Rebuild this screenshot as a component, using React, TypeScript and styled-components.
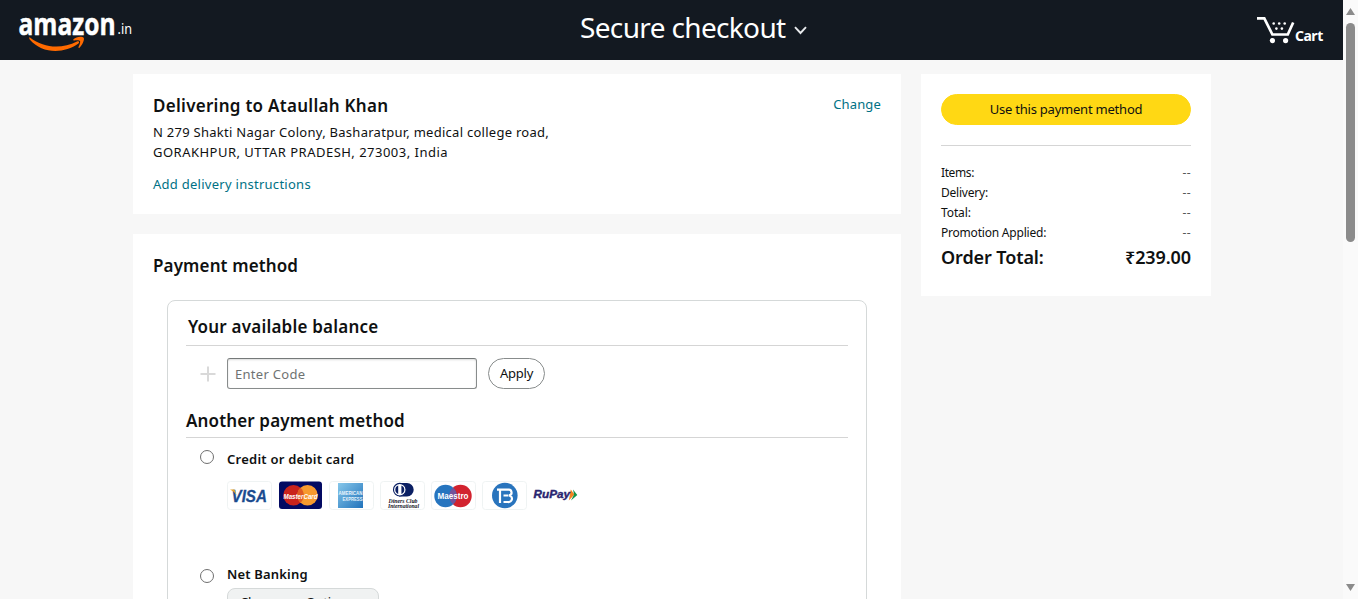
import React from "react";
import styled, { createGlobalStyle, css } from "styled-components";

const Global = createGlobalStyle`
  * { box-sizing: border-box; }
  html, body { margin: 0; height: 599px; overflow: hidden; }
  body { font-family: "Noto Sans", "Open Sans", sans-serif; font-size: 13px; line-height: 20px; color: #0f1111; background: #f7f7f7; }
  h1, h2, h3, p { margin: 0; }
`;

const Viewport = styled.div`
  display: flex;
  width: 1358px;
  height: 599px;
  overflow: hidden;
`;

const Page = styled.div`
  width: 1343px;
  height: 599px;
  overflow: hidden;
`;

const Header = styled.header`
  display: grid;
  grid-template-columns: 570px 1fr 106px;
  height: 60px;
  background: #131921;
  color: #fff;
`;

const Title = styled.h1`
  display: flex;
  align-items: center;
  height: 53px;
  padding-left: 10px;
  font-size: 28px;
  font-weight: 400;
  line-height: 36px;
  letter-spacing: -0.65px;
  white-space: nowrap;
  svg { margin: 7px 0 0 8px; }
`;

const CartLink = styled.div`
  display: flex;
  padding: 15px 0 0 20px;
  font-size: 14px;
  font-weight: 700;
  letter-spacing: -0.5px;
  span { margin-top: 11px; }
`;

const Columns = styled.main`
  display: grid;
  grid-template-columns: 768px 290px;
  column-gap: 20px;
  align-items: start;
  padding: 14px 0 0 133px;
`;

const Stack = styled.div`
  display: flex;
  flex-direction: column;
  gap: 20px;
`;

const Card = styled.section<{ $height: number }>`
  height: ${(p) => p.$height}px;
  padding: 20px;
  background: #fff;
`;

const CardTop = styled.div`
  display: flex;
  justify-content: space-between;
`;

const spacing = css<{ $track?: number }>`
  letter-spacing: ${(p) => p.$track ?? 0}px;
  white-space: nowrap;
`;

const Heading = styled.h2<{ $track?: number }>`
  font-size: 17px;
  font-weight: 600;
  line-height: 24px;
  ${spacing}
`;

const Line = styled.p<{ $track?: number }>`
  ${spacing}
`;

const Address = styled.div`
  margin: 4px 0 12px;
`;

const Link = styled.a<{ $track?: number }>`
  color: #007185;
  ${spacing}
`;

const Panel = styled.div`
  width: 700px;
  height: 420px;
  margin: 22px 0 0 14px;
  padding: 14px 18px 0;
  border: 1px solid #d5d9d9;
  border-radius: 8px;
`;

const PanelHeading = styled(Heading)<{ $gap: number; $indent?: number }>`
  padding: 0 0 ${(p) => p.$gap}px ${(p) => p.$indent ?? 0}px;
  border-bottom: 1px solid #d5d5d5;
`;

const CodeRow = styled.div`
  display: flex;
  align-items: center;
  height: 31px;
  margin: 12px 0 20px 14px;
`;

const CodeInput = styled.input`
  width: 250px;
  height: 31px;
  margin: 0 11px;
  padding: 1px 7px 0;
  border: 1px solid #888c8c;
  border-top-color: #757979;
  border-radius: 3px;
  box-shadow: inset 0 1px 2px rgba(15, 17, 17, 0.15);
  background: #fff;
  font: 13px/20px "Noto Sans", sans-serif;
  letter-spacing: 0.3px;
  &::placeholder { color: #6f7373; opacity: 1; }
`;

const PillButton = styled.button<{ $primary?: boolean }>`
  width: ${(p) => (p.$primary ? 250 : 57)}px;
  height: 31px;
  padding: 0 0 2px;
  border: 1px solid ${(p) => (p.$primary ? "#ffd814" : "#888c8c")};
  border-radius: 16px;
  background: ${(p) => (p.$primary ? "#ffd814" : "#fff")};
  color: #0f1111;
  font: 13px/20px "Noto Sans", sans-serif;
  letter-spacing: -0.22px;
`;

const Option = styled.div<{ $top: number }>`
  display: grid;
  grid-template-columns: 14px 1fr;
  column-gap: 13px;
  margin: ${(p) => p.$top}px 0 0 14px;
`;

const Radio = styled.span<{ $top: number }>`
  width: 14px;
  height: 14px;
  margin-top: ${(p) => p.$top}px;
  border: 1px solid #6f6f6f;
  border-radius: 50%;
  background: #fff;
`;

const OptionTitle = styled.h3<{ $track?: number }>`
  font-size: 13px;
  font-weight: 600;
  line-height: 20px;
  ${spacing}
`;

const Brands = styled.div`
  display: flex;
  gap: 6px;
  margin-top: 12px;
`;

const Brand = styled.svg`
  display: block;
  flex: none;
  width: 45px;
  height: 29px;
`;

const Select = styled.div`
  width: 152px;
  height: 31px;
  margin-top: 4px;
  padding: 3px 12px;
  border: 1px solid #d5d9d9;
  border-radius: 8px;
  background: #f0f2f2;
  line-height: 20px;
  letter-spacing: -0.2px;
`;

const Divider = styled.hr`
  height: 1px;
  margin: 20px 0 17px;
  border: 0;
  background: #d5d5d5;
`;

const SummaryRow = styled.div<{ $total?: boolean; $track?: number }>`
  display: flex;
  justify-content: space-between;
  font-size: ${(p) => (p.$total ? 18 : 12)}px;
  font-weight: ${(p) => (p.$total ? 600 : 400)};
  line-height: ${(p) => (p.$total ? 28 : 20)}px;
  ${spacing}
`;

const Dash = styled.span`
  color: #565959;
  letter-spacing: 0.4px;
`;

const ScrollTrack = styled.div`
  display: flex;
  flex-direction: column;
  align-items: center;
  justify-content: space-between;
  width: 15px;
  height: 599px;
  padding: 8px 0;
  background: #fafafa;
`;

const Thumb = styled.div`
  width: 9px;
  height: 219px;
  margin: 8px 0 auto;
  border-radius: 5px;
  background: #8b8b8b;
`;

const Logo = () => (
  <svg width="160" height="60" viewBox="0 0 160 60">
    <text x="18.5" y="35" fill="#fff" stroke="#fff" strokeWidth="0.5" fontFamily="Open Sans, sans-serif" fontWeight="700" fontSize="31" textLength="97" lengthAdjust="spacingAndGlyphs">amazon</text>
    <text x="117.5" y="34" fill="#fff" fontFamily="Noto Sans, sans-serif" fontSize="14" textLength="14.5" lengthAdjust="spacingAndGlyphs">.in</text>
    <path d="M30 37.5C44 48.5 62 49 77 41.5C79 40.6 80 42.3 78.4 43.5C64 54 42 54 29.7 39.5C28.8 38 29.2 37 30 37.5Z" fill="#ff6a00" />
    <path d="M73.5 39.3C76 36.6 82 36 83.7 37.8C84.8 40 82 45.5 79.5 47.7C78.8 48.2 78.2 47.7 78.5 47C79.6 44.5 80.6 42 80 41C79.2 40 76.5 40.2 74.2 40.6C73.3 40.7 72.9 39.9 73.5 39.3Z" fill="#ff6a00" />
  </svg>
);

const CartIcon = () => (
  <svg width="38" height="30" viewBox="0 0 38 30" fill="#fff">
    <path d="M0 3.3H7.3L15.4 19.5H30.8L36.2 7.5" fill="none" stroke="#fff" strokeWidth="2.7" />
    <circle cx="15.4" cy="25.6" r="2.6" />
    <circle cx="28.6" cy="25.6" r="2.6" />
    {[16.7, 22.2, 27.7].map((x) => <circle key={x} cx={x} cy="8.5" r="1.3" />)}
    {[19.4, 24.9].map((x) => <circle key={x} cx={x} cy="13.6" r="1.3" />)}
  </svg>
);

const Frame = () => <rect x="0.5" y="0.5" width="44" height="28" rx="3" fill="#fff" stroke="#eff3f3" />;

const Visa = () => (
  <Brand viewBox="0 0 45 29">
    <Frame />
    <text x="4.5" y="20.5" fill="#1b4b8f" stroke="#1b4b8f" strokeWidth="0.3" fontFamily="Liberation Sans, sans-serif" fontStyle="italic" fontWeight="700" fontSize="16.5" textLength="35.5" lengthAdjust="spacingAndGlyphs">VISA</text>
    <path d="M3 8.5H7.5L9.5 14Q7.5 10.5 3 8.5Z" fill="#e5a62d" />
  </Brand>
);

const MasterCard = () => (
  <Brand viewBox="0 0 45 29">
    <rect x="1" y="0.5" width="43" height="27.5" rx="3" fill="#030a62" />
    <circle cx="15.5" cy="14.2" r="10.3" fill="#c9231c" />
    <circle cx="29.5" cy="14.2" r="10.3" fill="#f79a2f" />
    <path d="M22.5 6.7A10.3 10.3 0 0 0 22.5 21.7A10.3 10.3 0 0 0 22.5 6.7Z" fill="#df5a24" />
    <text x="5.5" y="17.5" fill="#fff" fontFamily="Liberation Sans, sans-serif" fontStyle="italic" fontWeight="700" fontSize="8" textLength="34" lengthAdjust="spacingAndGlyphs">MasterCard</text>
  </Brand>
);

const Amex = () => (
  <Brand viewBox="0 0 45 29">
    <defs>
      <linearGradient id="amex" x1="0" y1="0" x2="1" y2="1">
        <stop offset="0" stopColor="#86c7ea" />
        <stop offset="1" stopColor="#2072bb" />
      </linearGradient>
    </defs>
    <Frame />
    <rect x="9" y="2" width="25" height="25" fill="url(#amex)" />
    <g fill="#e8f5fc" fontFamily="Liberation Sans, sans-serif" fontWeight="700" fontSize="6">
      <text x="9.5" y="13.5" textLength="24" lengthAdjust="spacingAndGlyphs">AMERICAN</text>
      <text x="13.5" y="19.5" textLength="20" lengthAdjust="spacingAndGlyphs">EXPRESS</text>
    </g>
  </Brand>
);

const Diners = () => (
  <Brand viewBox="0 0 45 29">
    <Frame />
    <path d="M19 2H27A6.7 6.7 0 0 1 27 15.4H19Z" fill="#0a1f63" />
    <circle cx="19.8" cy="8.7" r="6.3" fill="#fff" stroke="#0a1f63" strokeWidth="1.1" />
    <path d="M18.2 4.5A4.5 4.5 0 0 0 18.2 12.9ZM21.4 4.5A4.5 4.5 0 0 1 21.4 12.9Z" fill="#0a1f63" />
    <g fill="#15151f" fontFamily="Liberation Serif, serif" fontStyle="italic" fontWeight="700" fontSize="7">
      <text x="8.5" y="21.8" textLength="29" lengthAdjust="spacingAndGlyphs">Diners Club</text>
      <text x="8" y="27" textLength="31" lengthAdjust="spacingAndGlyphs">International</text>
    </g>
  </Brand>
);

const Maestro = () => (
  <Brand viewBox="0 0 45 29">
    <Frame />
    <circle cx="29.5" cy="15" r="11.2" fill="#d2232f" />
    <circle cx="14.5" cy="15" r="11.2" fill="#2675bf" />
    <path d="M22 6.7A11.2 11.2 0 0 1 22 23.3A11.2 11.2 0 0 1 22 6.7Z" fill="#75529a" />
    <text x="6.5" y="18" fill="#fff" fontFamily="Liberation Sans, sans-serif" fontWeight="700" fontSize="8.3" textLength="31" lengthAdjust="spacingAndGlyphs">Maestro</text>
  </Brand>
);

const BhimCard = () => (
  <Brand viewBox="0 0 45 29">
    <Frame />
    <circle cx="22.8" cy="14.5" r="12.8" fill="#2974bd" />
    <path d="M15 8.7H26A2.9 2.9 0 0 1 27.2 14.4A3.3 3.3 0 0 1 26 21H21.5M18 8.7V22M21.5 14.5H26.5" fill="none" stroke="#fff" strokeWidth="2.2" />
  </Brand>
);

const RuPay = () => (
  <Brand viewBox="0 0 45 29">
    <path d="M37.8 8.5L41.5 13.5L35.8 19.5Z" fill="#f58220" />
    <path d="M40 8.5L44.3 14L38 19.5L41 13.5Z" fill="#159447" />
    <text x="0.5" y="17" fill="#29246f" stroke="#29246f" strokeWidth="0.4" fontFamily="Liberation Sans, sans-serif" fontStyle="italic" fontWeight="700" fontSize="11.5" textLength="36.5" lengthAdjust="spacingAndGlyphs">RuPay</text>
  </Brand>
);

const summary = [
  { label: "Items:", track: -0.4 },
  { label: "Delivery:", track: -0.22 },
  { label: "Total:", track: -0.1 },
  { label: "Promotion Applied:", track: -0.21 },
];

export default function App() {
  return (
    <>
      <Global />
      <Viewport>
        <Page>
          <Header>
            <Logo />
            <Title>
              Secure checkout
              <svg width="13" height="9" viewBox="0 0 13 9"><path d="M1 1.2L6.5 7L12 1.2" fill="none" stroke="#e7e9ec" strokeWidth="1.9" /></svg>
            </Title>
            <CartLink>
              <CartIcon />
              <span>Cart</span>
            </CartLink>
          </Header>
          <Columns>
            <Stack>
              <Card $height={140}>
                <CardTop>
                  <Heading $track={0.28}>Delivering to Ataullah Khan</Heading>
                  <Link $track={0.15}>Change</Link>
                </CardTop>
                <Address>
                  <Line $track={0.27}>N 279 Shakti Nagar Colony, Basharatpur, medical college road,</Line>
                  <Line $track={0.48}>GORAKHPUR, UTTAR PRADESH, 273003, India</Line>
                </Address>
                <Link $track={0.27}>Add delivery instructions</Link>
              </Card>
              <Card $height={500}>
                <Heading $track={0.13}>Payment method</Heading>
                <Panel>
                  <PanelHeading $gap={6} $indent={2} $track={0.21}>Your available balance</PanelHeading>
                  <CodeRow>
                    <svg width="16" height="16" viewBox="0 0 16 16"><path d="M8 0.5V15.5M0.5 8H15.5" stroke="#d9d9d9" strokeWidth="2" /></svg>
                    <CodeInput placeholder="Enter Code" />
                    <PillButton>Apply</PillButton>
                  </CodeRow>
                  <PanelHeading $gap={4} $track={0.14}>Another payment method</PanelHeading>
                  <Option $top={11}>
                    <Radio $top={1} />
                    <div>
                      <OptionTitle $track={0.24}>Credit or debit card</OptionTitle>
                      <Brands>
                        <Visa />
                        <MasterCard />
                        <Amex />
                        <Diners />
                        <Maestro />
                        <BhimCard />
                        <RuPay />
                      </Brands>
                    </div>
                  </Option>
                  <Option $top={54}>
                    <Radio $top={5} />
                    <div>
                      <OptionTitle $track={0.18}>Net Banking</OptionTitle>
                      <Select>Choose an Option</Select>
                    </div>
                  </Option>
                </Panel>
              </Card>
            </Stack>
            <Card $height={222}>
              <PillButton $primary>Use this payment method</PillButton>
              <Divider />
              {summary.map(({ label, track }) => (
                <SummaryRow key={label} $track={track}>
                  <span>{label}</span>
                  <Dash>--</Dash>
                </SummaryRow>
              ))}
              <SummaryRow $total $track={-0.1}>
                <span>Order Total:</span>
                <span>₹239.00</span>
              </SummaryRow>
            </Card>
          </Columns>
        </Page>
        <ScrollTrack>
          <svg width="9" height="7" viewBox="0 0 9 7"><path d="M4.5 0L9 7H0Z" fill="#8b8b8b" /></svg>
          <Thumb />
          <svg width="9" height="7" viewBox="0 0 9 7"><path d="M0 0H9L4.5 7Z" fill="#8b8b8b" /></svg>
        </ScrollTrack>
      </Viewport>
    </>
  );
}
